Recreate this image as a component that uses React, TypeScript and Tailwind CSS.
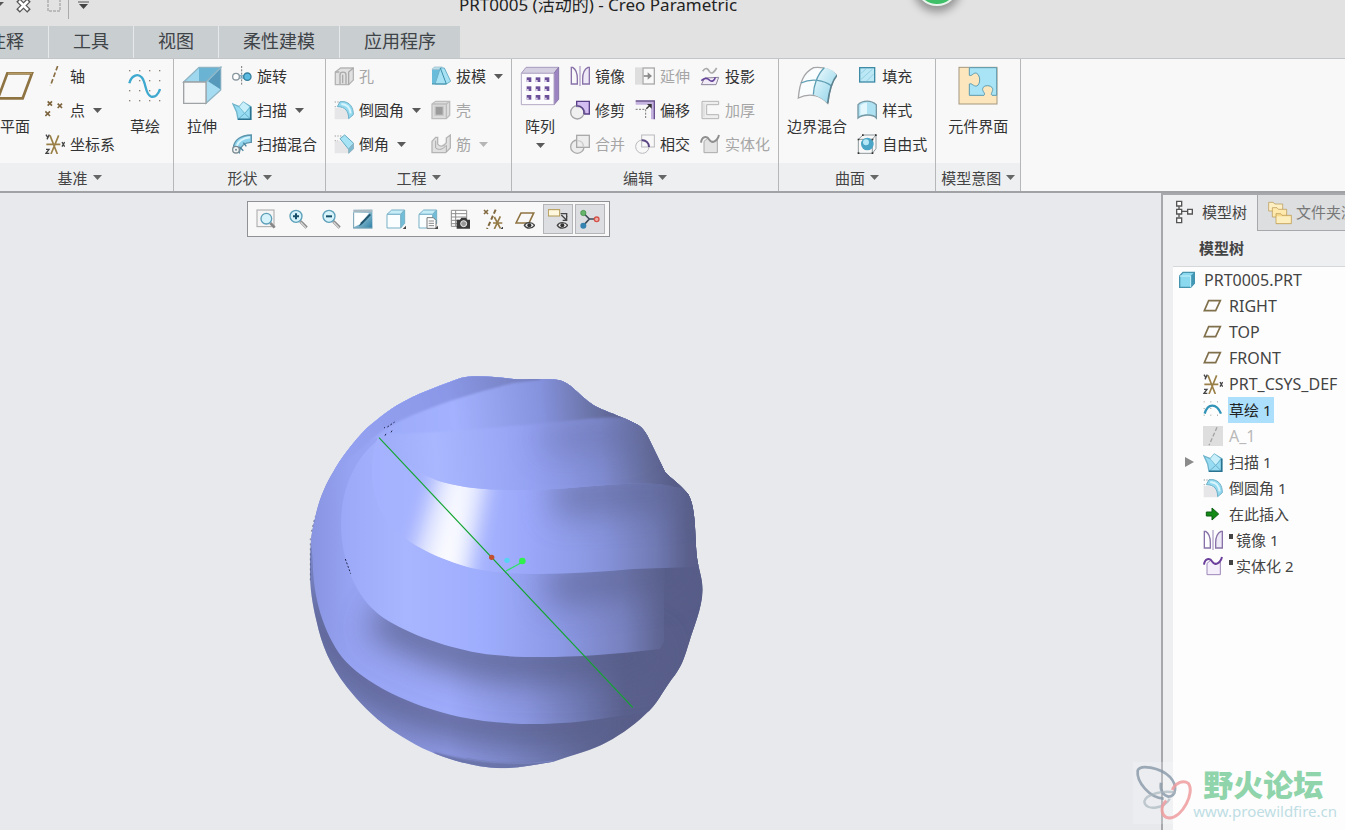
import { useState } from "react";
import type { ReactNode } from "react";

type ToolItem = {
  label: string;
  icon: ReactNode;
  caret?: boolean;
  disabled?: boolean;
};

const Icon = ({ children }: { children: ReactNode }) => (
  <svg viewBox="0 0 60 60" className="size-5 shrink-0" fill="none" strokeWidth="4">
    {children}
  </svg>
);

const BigIcon = ({ children }: { children: ReactNode }) => (
  <svg viewBox="0 0 120 120" className="size-10 shrink-0" fill="none" strokeWidth="4">
    {children}
  </svg>
);

const Caret = () => (
  <svg viewBox="0 0 9 5" className="h-[5px] w-[9px] shrink-0 fill-current">
    <path d="M0 0h9L4.500 5z" />
  </svg>
);

const dots = [6, 26, 46, 66].flatMap((x) => [6, 26, 46, 66].map((y) => [x, y]));

/* ---------- datum icons ---------- */

const PlaneBig = () => (
  <BigIcon>
    <path d="M37 22H111L83 97H9z" stroke="#8f7443" strokeWidth="8" />
    <path d="M39 22H111" stroke="#b59a63" strokeWidth="4" />
  </BigIcon>
);

const AxisIcon = () => (
  <Icon>
    <path d="M38 0 16 60" stroke="#8a6f45" strokeWidth="5" strokeDasharray="14 7" />
  </Icon>
);

const PointIcon = () => (
  <Icon>
    <g stroke="#7d6540" strokeWidth="5">
      <path d="M8 4l13 13M21 4 8 17M38 11l13 13M51 11 38 24M1 34l14 14M15 34 1 48" />
    </g>
  </Icon>
);

const CsysIcon = () => (
  <Icon>
    <path d="M4 31H46M15 4l22 56M41 4 18 60" stroke="#9a8047" strokeWidth="5" />
    <path d="M3 2l5 8M13 2 6 16M3 46h9L3 58h10M51 24l8 14M59 24l-8 14" stroke="#454545" />
  </Icon>
);

const SketchBig = () => (
  <BigIcon>
    {[12, 42, 72, 102].flatMap((x) =>
      [12, 42, 72, 102].map((y) => (
        <rect key={`${x}-${y}`} x={x} y={y} width="4" height="4" fill="#8d8478" />
      ))
    )}
    <path
      d="M13 52C18 30 38 20 50 34C64 50 60 84 77 91C90 96 100 86 105 69"
      stroke="#3fa9cf"
      strokeWidth="7"
    />
  </BigIcon>
);

/* ---------- shape icons ---------- */

const ExtrudeBig = () => (
  <BigIcon>
    <path d="M5 48 51 4H116L72 48z" fill="#9fd8ee" stroke="#8fb4c4" />
    <path d="M51 6V48H72L115 6z" fill="#6bb3d2" />
    <path d="M72 48 116 4V72L72 112z" fill="#a5dcf1" stroke="#8fb4c4" />
    <path d="M78 46 115 8V70z" fill="#5799ba" />
    <path d="M5 48H72V112H5z" fill="#f7f7f7" stroke="#9fa3a6" />
  </BigIcon>
);

const RevolveIcon = () => (
  <Icon>
    <path d="M29 0V60" stroke="#777" strokeWidth="3" strokeDasharray="6 4" />
    <path d="M14 24C22 32 36 32 46 24M14 40C22 34 36 34 46 40" stroke="#7daac2" />
    <circle cx="12" cy="32" r="10" fill="#fff" stroke="#89979f" />
    <circle cx="46" cy="32" r="11" fill="#5bbbe0" stroke="#357f9e" />
  </Icon>
);

const SweepIcon = () => (
  <Icon>
    <path d="M3 12 22 20 34 6 56 20V58H18L14 36z" fill="#97dcf2" stroke="#6fb4cb" />
    <path d="M22 20 38 40 56 20M38 40 18 58M38 40 56 58" stroke="#68b0c8" strokeWidth="3" />
    <path d="M22 20 34 6 52 20 38 38z" fill="#c9f0fa" />
    <path d="M56 20V58H18" stroke="#2b7391" strokeWidth="5" />
  </Icon>
);

const SweepBlendIcon = () => (
  <Icon>
    <path d="M4 42C6 18 26 4 58 3V25C38 24 24 38 22 56z" fill="#8fd3ec" stroke="#5b94ab" />
    <path d="M14 36C20 20 36 12 54 10" stroke="#d8f5fd" strokeWidth="6" />
    <path d="M22 38 34 50M34 26 43 37" stroke="#4a819a" />
    <circle cx="12" cy="47" r="10" fill="#f0f4f5" stroke="#7b8a92" />
    <circle cx="12" cy="47" r="3" fill="#7b8a92" />
  </Icon>
);

/* ---------- engineering icons ---------- */

const HoleIcon = () => (
  <Icon>
    <path d="M4 18 20 6H58V42L44 56H4z" fill="#e1e1e1" stroke="#b5b5b5" />
    <path d="M18 54V26C18 16 36 16 36 26V54M44 56V18L58 6M26 52V26M4 18H16" stroke="#aaa" />
  </Icon>
);

const RoundIcon = () => (
  <Icon>
    <path d="M2 24V58H44V42C40 28 28 22 2 24z" fill="#e6e6e8" />
    <path d="M18 5H30C48 8 58 22 58 44L44 56C44 34 34 20 10 20z" fill="#93d9ef" stroke="#6fb0c8" strokeWidth="3" />
    <path d="M22 12C38 13 48 24 50 40" stroke="#d8f5fd" strokeWidth="6" />
    <path d="M2 6H16M2 20H8" stroke="#bbb" strokeDasharray="4 4" />
  </Icon>
);

const ChamferIcon = () => (
  <Icon>
    <path d="M2 22V58H44V46L18 20z" fill="#e6e6e8" />
    <path d="M18 14 32 3 59 28 44 46z" fill="#a6e4f5" stroke="#64a9c2" strokeWidth="3" />
    <path d="M44 46 59 28V44L44 58z" fill="#7db9cf" stroke="#8cb2c0" strokeWidth="3" />
    <path d="M2 6H22M2 20H12" stroke="#bbb" strokeDasharray="4 4" />
  </Icon>
);

const DraftIcon = () => (
  <Icon>
    <path d="M3 10H26V54H3z" fill="#69bdda" />
    <path d="M3 10 10 3H34L28 10z" fill="#bfe4ef" stroke="#8fb4c4" strokeWidth="2" />
    <path d="M28 6H40L59 46 46 54H12z" fill="#a6e2f3" stroke="#6db1c9" strokeWidth="3" />
    <path d="M28 6 46 54M3 54H46" stroke="#3f8eab" strokeWidth="3" />
  </Icon>
);

const ShellIcon = () => (
  <Icon>
    <path d="M3 12 14 4H56V46L46 56H3z" fill="#dcdcdc" stroke="#bdbdbd" />
    <rect x="12" y="19" width="25" height="27" fill="#9b9b9b" stroke="#c9c9c9" />
    <path d="M46 56V12L56 4M3 12H46" stroke="#bdbdbd" />
  </Icon>
);

const RibIcon = () => (
  <Icon>
    <path d="M3 22 14 10H20V30C26 40 38 38 46 26L46 12 58 3V42L44 56H3z" fill="#e0e0e0" stroke="#b5b5b5" />
    <path d="M14 20V42C24 50 36 46 46 34V54" stroke="#aaa" strokeWidth="3" />
  </Icon>
);

/* ---------- editing icons ---------- */

const PatternBig = () => (
  <BigIcon>
    <path d="M4 22 18 4H116L102 22z" fill="#d5cfe2" stroke="#a79bbd" strokeWidth="3" />
    <path d="M102 22 116 4V100L102 116z" fill="#9c84c2" stroke="#8b78ab" strokeWidth="3" />
    <path d="M4 22H102V116H4z" fill="#fbfbfd" stroke="#b3a9c4" strokeWidth="3" />
    {[20, 47, 74].flatMap((x) =>
      [34, 61, 87].map((y) => (
        <g key={`${x}-${y}`}>
          <rect x={x} y={y} width="14" height="14" fill="#6b4f98" />
          <rect x={x} y={y + 8} width="6" height="6" fill="#d9cfe9" />
        </g>
      ))
    )}
  </BigIcon>
);

const MirrorIcon = () => (
  <Icon>
    <path d="M4 4H8C18 10 22 22 22 38V54H4z" stroke="#8871a8" />
    <path d="M58 4H54C42 10 38 22 38 38V54H58z" fill="#eee9f6" stroke="#8871a8" />
    <path d="M30 0V60" stroke="#9a86b8" strokeWidth="3" />
  </Icon>
);

const TrimIcon = () => (
  <Icon>
    <path d="M20 4H58V42H44C44 26 34 20 20 20z" fill="#d3bdf2" stroke="#583f87" />
    <circle cx="22" cy="37" r="20" fill="#ececee" fillOpacity="0.700" stroke="#a4a4a8" />
    <path d="M18 18C34 16 44 28 42 42" stroke="#583f87" />
  </Icon>
);

const MergeIcon = () => (
  <Icon>
    <circle cx="22" cy="38" r="20" fill="#ededed" stroke="#aaa" />
    <rect x="20" y="4" width="38" height="36" fill="#ededed" stroke="#aaa" />
    <path d="M22 20C34 20 40 28 40 38" stroke="#ccc" />
  </Icon>
);

const ExtendIcon = () => (
  <Icon>
    <rect x="0" y="4" width="22" height="52" fill="#dedede" />
    <rect x="24" y="6" width="34" height="48" stroke="#aaa" />
    <path d="M26 30H40" stroke="#8b8b8b" strokeWidth="5" />
    <path d="M38 19 51 30 38 41z" fill="#8b8b8b" />
  </Icon>
);

const OffsetIcon = () => (
  <Icon>
    <path d="M2 4H58V58H48V14H2z" fill="#c5b3df" />
    <path d="M2 3H58V58" stroke="#69518f" />
    <path d="M2 28H32V58" stroke="#777" strokeWidth="3" strokeDasharray="6 4" />
    <path d="M34 26 46 15" stroke="#333" />
    <path d="M36 12H50V26z" fill="#333" />
  </Icon>
);

const IntersectIcon = () => (
  <Icon>
    <rect x="20" y="3" width="38" height="36" stroke="#b9b9bd" strokeWidth="3" />
    <circle cx="22" cy="38" r="20" stroke="#b9b9bd" strokeWidth="3" />
    <path d="M20 19C34 18 42 28 42 39" stroke="#5a4483" strokeWidth="6" />
  </Icon>
);

const ProjectIcon = () => (
  <Icon>
    <path d="M8 16C18 2 24 8 28 16C34 26 42 20 50 6" stroke="#aaa" strokeWidth="5" />
    <path d="M14 36 4 56H48L56 34z" fill="#f1ecf8" stroke="#8d8498" strokeWidth="3" />
    <path d="M4 44C14 34 22 36 28 42C36 50 44 42 46 34" stroke="#66449a" strokeWidth="5" />
  </Icon>
);

const ThickenIcon = () => (
  <Icon>
    <path d="M6 4H56V14H20V44H56V56H6z" fill="#eee" stroke="#b5b5b5" strokeWidth="3" />
    <path d="M12 10V50" stroke="#d5d5d5" strokeWidth="3" />
  </Icon>
);

const SolidifyIcon = ({ muted = false }: { muted?: boolean }) => (
  <Icon>
    <path
      d="M12 22V56H52V16L36 26 24 12z"
      fill={muted ? "#e3e3e3" : "#f4effa"}
      stroke={muted ? "#aaa" : "#9c86b8"}
      strokeWidth="3"
    />
    <path
      d="M3 26C5 8 20 4 28 17C36 30 52 22 57 3"
      stroke={muted ? "#8f8f8f" : "#6b3f9b"}
      strokeWidth="6"
    />
  </Icon>
);

/* ---------- surface icons ---------- */

const BoundaryBig = () => (
  <BigIcon>
    <defs>
      <linearGradient id="surf" x1="0" y1="0" x2="1" y2="1">
        <stop offset="0" stopColor="#f5fdff" />
        <stop offset="1" stopColor="#86d0e8" />
      </linearGradient>
    </defs>
    <path d="M4 96C8 48 20 20 50 5C76 2 100 8 120 28C102 48 96 80 92 112C72 90 40 78 4 96z" fill="#fafdfe" stroke="#a5a5a8" />
    <path d="M82 5C100 7 112 16 120 28C102 48 96 80 92 112C82 102 62 88 49 86C50 60 60 26 82 5z" fill="url(#surf)" />
    <path d="M82 5C60 26 50 60 49 86M12 51C44 36 80 42 104 60" stroke="#5f9fb4" />
    <path d="M120 28C102 48 96 80 92 112" stroke="#5d8290" strokeWidth="5" />
  </BigIcon>
);

const FillIcon = () => (
  <Icon>
    <rect x="8" y="5" width="45" height="43" fill="#bce8f6" stroke="#3e8ba6" />
    <path d="M12 22 28 8M12 40 46 10M28 46 50 24" stroke="#7fc3da" strokeWidth="2" />
  </Icon>
);

const StyleIcon = () => (
  <Icon>
    <path d="M3 14C18 0 42 0 58 14V54C48 42 18 42 3 54z" fill="#aee2f3" stroke="#7797a3" />
    <path d="M10 16C16 10 24 8 30 8V42C22 42 14 44 10 46z" fill="#e3f7fc" />
  </Icon>
);

const FreestyleIcon = () => (
  <Icon>
    <path d="M4 16 18 3H57V44L46 58H4z" stroke="#90989c" strokeWidth="3" />
    <path d="M4 16H46V58M46 16 57 3" stroke="#90989c" strokeWidth="3" />
    <circle cx="31" cy="30" r="19" fill="#4aa5c6" />
    <circle cx="27" cy="25" r="9" fill="#b5e8f6" />
    <path d="M2 14h5v5H2zM44 14h5v5H44zM2 55h5v5H2zM44 55h5v5H44zM54 1h5v5H54zM15 1h5v5H15z" fill="#333" />
  </Icon>
);

const ComponentBig = () => (
  <BigIcon>
    <rect x="3" y="4" width="114" height="110" fill="#fbe6bd" stroke="#a39880" strokeWidth="3" />
    <path
      d="M34 5H116V88H102C96 84 106 76 104 68C100 56 76 56 74 68C72 76 84 82 78 88H34V54C42 50 46 62 56 60C68 56 68 28 56 22C46 18 42 32 34 28z"
      fill="#a9e4f6"
      stroke="#5c9bb0"
      strokeWidth="3"
    />
  </BigIcon>
);

/* ---------- view toolbar icons ---------- */

const Lens = ({ sign }: { sign: string }) => (
  <Icon>
    <path d="M37 37 56 56" stroke="#8b8b8b" strokeWidth="9" />
    <path d="M38 40 54 56" stroke="#d7d7d7" strokeWidth="4" />
    <circle cx="24" cy="22" r="18" fill="#d6f2fa" stroke="#5c9fb8" />
    <path d={sign} stroke="#174f68" strokeWidth="6" />
  </Icon>
);

const RefitIcon = () => (
  <Icon>
    <rect x="3" y="3" width="51" height="50" fill="#f5f5f5" stroke="#a5a5a5" strokeWidth="3" />
    <path d="M43 42 56 56" stroke="#888" strokeWidth="8" />
    <circle cx="31" cy="29" r="16" fill="#d6f2fa" stroke="#5c9fb8" />
  </Icon>
);

const RepaintIcon = () => (
  <Icon>
    <defs>
      <linearGradient id="repaint" x1="0" y1="0" x2="1" y2="1">
        <stop offset="0" stopColor="#d9f1f8" />
        <stop offset="1" stopColor="#2c7ea3" />
      </linearGradient>
    </defs>
    <rect x="1" y="2" width="57" height="56" fill="url(#repaint)" />
    <path d="M3 12H48L24 44 3 54z" fill="#fff" />
    <path d="M54 18 28 45 18 52 24 40 50 14z" fill="#22566f" />
    <path d="M1 2H58V10H1z" fill="#a9b9c2" />
    <path d="M2 10V58M1 57H58" stroke="#7ba3b5" strokeWidth="3" />
  </Icon>
);

const Cube = () => (
  <>
    <path d="M3 16 17 3H56L44 16z" fill="#c6ecf7" stroke="#76b1c7" strokeWidth="3" />
    <path d="M44 16 56 3V43L44 57z" fill="#72bdd7" stroke="#76b1c7" strokeWidth="3" />
    <path d="M3 16H44V57H3z" fill="#fafeff" stroke="#76b1c7" strokeWidth="3" />
  </>
);

const CubeIcon = () => (
  <Icon>
    <Cube />
    <path d="M60 50V60H50z" fill="#444" />
  </Icon>
);

const SavedViewIcon = () => (
  <Icon>
    <Cube />
    <path d="M27 26H46L54 34V58H27z" fill="#fff" stroke="#777" strokeWidth="3" />
    <path d="M32 36H48M32 43H48M32 50H48" stroke="#888" strokeWidth="3" />
    <path d="M60 50V60H50z" fill="#444" />
  </Icon>
);

const ViewManagerIcon = () => (
  <Icon>
    <path d="M4 4H50V52H4zM4 14H50M4 24H50M4 34H50M4 44H50M17 4V52" fill="#fff" stroke="#8d8d8d" strokeWidth="3" />
    <path d="M20 32H30L34 26H48L52 32H60V59H20z" fill="#3a3a3a" />
    <circle cx="41" cy="44" r="9" fill="#999" stroke="#eee" strokeWidth="3" />
  </Icon>
);

const DatumDisplayIcon = () => (
  <Icon>
    <path d="M3 3l12 12M15 3 3 15" stroke="#80683f" strokeWidth="5" />
    <path d="M38 2 12 60" stroke="#80683f" strokeWidth="6" strokeDasharray="13 7" />
    <path d="M30 42H58M34 24l18 34M52 22 34 60" stroke="#947a46" strokeWidth="5" />
    <path d="M62 50V60H52z" fill="#444" />
  </Icon>
);

const Eye = () => (
  <>
    <path d="M28 49C34 38 52 38 59 49C52 60 34 60 28 49z" fill="#eee" stroke="#444" strokeWidth="4" />
    <circle cx="43" cy="49" r="6" fill="#333" />
  </>
);

const PlaneDisplayIcon = () => (
  <Icon>
    <path d="M18 12H56L42 42H3z" stroke="#8f7443" strokeWidth="5" />
    <Eye />
  </Icon>
);

const AnnotationIcon = () => (
  <Icon>
    <rect x="1" y="2" width="34" height="19" fill="#fff8df" stroke="#b39853" strokeWidth="3" />
    <path d="M38 14H56V24" stroke="#444" />
    <path d="M40 18 56 34M56 22V34H44" stroke="#444" />
    <Eye />
  </Icon>
);

const SpinCenterIcon = () => (
  <Icon>
    <path d="M10 12 28 30 50 30M28 30 10 50" stroke="#3f4a56" strokeWidth="5" />
    <circle cx="10" cy="12" r="8" fill="#68b56c" stroke="#3d8a44" strokeWidth="2" />
    <circle cx="50" cy="31" r="7" fill="#efb0a8" stroke="#d3524a" />
    <circle cx="10" cy="50" r="9" fill="#3583b0" />
  </Icon>
);

/* ---------- model tree icons ---------- */

const PartIcon = () => (
  <Icon>
    <path d="M2 18 12 7H46V40L35 52H2z" fill="#8ad9ef" stroke="#4694ae" />
    <path d="M35 18 46 7V40L35 52z" fill="#4297b5" />
    <path d="M2 18H35V52" stroke="#c7f2fb" strokeWidth="3" />
  </Icon>
);

const PlaneIcon = () => (
  <Icon>
    <path d="M17 14H52L38 44H4z" stroke="#80704c" strokeWidth="5" />
  </Icon>
);

const SketchIcon = () => (
  <Icon>
    {dots.map(([x, y]) => (
      <rect key={`${x}-${y}`} x={x - 4} y={y - 2} width="3" height="3" fill="#999" />
    ))}
    <path d="M5 41C14 10 40 8 54 41" stroke="#3293b8" strokeWidth="7" />
  </Icon>
);

const MutedAxisIcon = () => (
  <Icon>
    <rect width="60" height="60" fill="#dedede" />
    <path d="M42 4 18 58" stroke="#a3a3a3" strokeDasharray="12 6" />
  </Icon>
);

const InsertIcon = () => (
  <Icon>
    <path d="M10 24H27V12L47 30 27 48V36H10z" fill="#138a15" stroke="#0b5c10" strokeWidth="3" />
  </Icon>
);

const TreeIcon = () => (
  <svg viewBox="0 0 60 72" className="h-6 w-5 shrink-0" fill="none" stroke="#555" strokeWidth="4">
    <path d="M12 19V27M12 42V52M18 34H38" />
    <path d="M5 4H20V18H5zM5 28H20V42H5zM5 54H20V68H5zM38 28H52V42H38z" fill="#fff" />
  </svg>
);

const FoldersIcon = () => (
  <svg viewBox="0 0 72 72" className="size-6 shrink-0" stroke="#b3924d" strokeWidth="2">
    <path d="M2 4H16L20 9H44V30H2z" fill="#fff0c4" />
    <path d="M13 20H27L31 25H56V48H13z" fill="#ffe9ad" />
    <path d="M24 38H38L42 43H70V68H24z" fill="#f7da8c" />
    <path d="M26 46H68V66H26z" fill="#fdeebd" stroke="none" />
  </svg>
);

/* ---------- ribbon ---------- */

const SmallTool = ({ label, icon, caret, disabled }: ToolItem) => (
  <button
    type="button"
    disabled={disabled}
    className="flex h-8.5 items-center gap-[5px] whitespace-nowrap text-[#333] disabled:text-[#a6a6a6]"
  >
    {icon}
    <span>{label}</span>
    {caret && (
      <span className="ml-[3px] opacity-80">
        <Caret />
      </span>
    )}
  </button>
);

const ToolColumn = ({ items }: { items: ToolItem[] }) => (
  <div className="flex flex-col items-start">
    {items.map((item) => (
      <SmallTool key={item.label} {...item} />
    ))}
  </div>
);

const BigTool = ({ label, icon, caret }: ToolItem) => (
  <button type="button" className="flex flex-col items-center self-start whitespace-nowrap pt-[7px] text-[#333]">
    {icon}
    <span className="mt-1 leading-8">{label}</span>
    {caret && (
      <span className="mt-px opacity-80">
        <Caret />
      </span>
    )}
  </button>
);

const Group = ({ title, children }: { title: string; children: ReactNode }) => (
  <section className="flex shrink-0 flex-col border-r border-[#b5b7b9]">
    <div className="flex h-26">{children}</div>
    <button
      type="button"
      className="flex h-7 items-center justify-center gap-[5px] bg-[#edeff1] pt-px text-[#444]"
    >
      <span>{title}</span>
      <span className="opacity-80">
        <Caret />
      </span>
    </button>
  </section>
);

const Ribbon = () => (
  <div className="flex border-t border-b-2 border-t-[#c3c6c8] border-b-[#a0a2a5] bg-[#f8f8f8] text-[15px] leading-5">
    <div className="-ml-3.5 flex">
      <Group title="基准">
        <div className="flex pl-[9px]">
          <BigTool label="平面" icon={<PlaneBig />} />
        </div>
        <div className="flex gap-2.5 pr-2 pl-2.5">
          <ToolColumn
            items={[
              { label: "轴", icon: <AxisIcon /> },
              { label: "点", icon: <PointIcon />, caret: true },
              { label: "坐标系", icon: <CsysIcon /> },
            ]}
          />
          <BigTool label="草绘" icon={<SketchBig />} />
        </div>
      </Group>
    </div>
    <Group title="形状">
      <div className="flex pr-2">
        <div className="flex pr-2.5 pl-2">
          <BigTool label="拉伸" icon={<ExtrudeBig />} />
        </div>
        <ToolColumn
          items={[
            { label: "旋转", icon: <RevolveIcon /> },
            { label: "扫描", icon: <SweepIcon />, caret: true },
            { label: "扫描混合", icon: <SweepBlendIcon /> },
          ]}
        />
      </div>
    </Group>
    <Group title="工程">
      <div className="flex gap-2.5 px-2">
        <ToolColumn
          items={[
            { label: "孔", icon: <HoleIcon />, disabled: true },
            { label: "倒圆角", icon: <RoundIcon />, caret: true },
            { label: "倒角", icon: <ChamferIcon />, caret: true },
          ]}
        />
        <ToolColumn
          items={[
            { label: "拔模", icon: <DraftIcon />, caret: true },
            { label: "壳", icon: <ShellIcon />, disabled: true },
            { label: "筋", icon: <RibIcon />, caret: true, disabled: true },
          ]}
        />
      </div>
    </Group>
    <Group title="编辑">
      <div className="flex pr-2.5 pl-2">
        <BigTool label="阵列" icon={<PatternBig />} caret />
      </div>
      <div className="flex gap-2.5 pr-2">
        <ToolColumn
          items={[
            { label: "镜像", icon: <MirrorIcon /> },
            { label: "修剪", icon: <TrimIcon /> },
            { label: "合并", icon: <MergeIcon />, disabled: true },
          ]}
        />
        <ToolColumn
          items={[
            { label: "延伸", icon: <ExtendIcon />, disabled: true },
            { label: "偏移", icon: <OffsetIcon /> },
            { label: "相交", icon: <IntersectIcon /> },
          ]}
        />
        <ToolColumn
          items={[
            { label: "投影", icon: <ProjectIcon /> },
            { label: "加厚", icon: <ThickenIcon />, disabled: true },
            { label: "实体化", icon: <SolidifyIcon muted />, disabled: true },
          ]}
        />
      </div>
    </Group>
    <Group title="曲面">
      <div className="flex gap-2.5 px-2">
        <BigTool label="边界混合" icon={<BoundaryBig />} />
        <ToolColumn
          items={[
            { label: "填充", icon: <FillIcon /> },
            { label: "样式", icon: <StyleIcon /> },
            { label: "自由式", icon: <FreestyleIcon /> },
          ]}
        />
      </div>
    </Group>
    <Group title="模型意图">
      <div className="flex px-3">
        <BigTool label="元件界面" icon={<ComponentBig />} />
      </div>
    </Group>
  </div>
);

/* ---------- title bar and tabs ---------- */

const TitleBar = () => (
  <header className="relative flex h-6.5 justify-center">
    <h1 className="mr-[149px] whitespace-nowrap text-[17px] leading-2.5 text-[#222]">
      PRT0005 (活动的) - Creo Parametric
    </h1>
    <svg viewBox="0 0 100 20" className="absolute top-0 left-0 h-5 w-25" fill="none">
      <path d="M0 2H4L0 6z" fill="#555" />
      <path d="M18 0 29 11M29 0 18 11" stroke="#555" strokeWidth="5" />
      <path d="M19 1 28 10M28 1 19 10" stroke="#fff" strokeWidth="2.500" />
      <path d="M48 0V11H60V0" stroke="#bbb" strokeWidth="2" strokeDasharray="3 1" />
      <path d="M68.500 0V19" stroke="#aaa" />
      <path d="M78 2H89" stroke="#555" />
      <path d="M79 4H88L83.500 9z" fill="#444" />
    </svg>
    <button
      type="button"
      aria-label="Assistant"
      className="absolute -top-[38px] left-[915px] size-11 rounded-full border-2 border-[#e9f5ec] bg-[#3fbf68] shadow-[0_4px_8px_2px_rgba(0,0,0,0.35)]"
    />
  </header>
);

const ribbonTabs = ["注释", "工具", "视图", "柔性建模", "应用程序"];

const RibbonTabs = () => (
  <nav className="-ml-9 flex h-8 text-lg text-[#3f4448]">
    {ribbonTabs.map((tab) => (
      <button
        key={tab}
        type="button"
        className="border-r border-[#e6e8ea] bg-[#c9ced1] px-6 pb-[3px] whitespace-nowrap last:border-r-0"
      >
        {tab}
      </button>
    ))}
  </nav>
);

/* ---------- graphics area ---------- */

const viewTools = [
  { name: "Refit", icon: <RefitIcon /> },
  { name: "Zoom in", icon: <Lens sign="M15 22H33M24 13V31" /> },
  { name: "Zoom out", icon: <Lens sign="M15 22H33" /> },
  { name: "Repaint", icon: <RepaintIcon /> },
  { name: "Display style", icon: <CubeIcon /> },
  { name: "Saved orientations", icon: <SavedViewIcon /> },
  { name: "View manager", icon: <ViewManagerIcon /> },
  { name: "Datum display", icon: <DatumDisplayIcon /> },
  { name: "Plane display", icon: <PlaneDisplayIcon /> },
  { name: "Annotation display", icon: <AnnotationIcon />, on: true },
  { name: "Spin center", icon: <SpinCenterIcon />, on: true },
];

const ViewToolbar = () => (
  <div className="mt-2 ml-[247px] flex h-9 w-[363px] items-center justify-between self-start border border-[#8f9194] bg-[#f8f8f8] pr-1 pl-[3px]">
    {viewTools.map((tool) => (
      <button
        key={tool.name}
        type="button"
        aria-label={tool.name}
        aria-pressed={!!tool.on}
        className="flex size-[30px] items-center justify-center border border-transparent aria-pressed:border-[#b3b5b9] aria-pressed:bg-[#dddee2]"
      >
        {tool.icon}
      </button>
    ))}
  </div>
);

const silhouette =
  "M480 40C515 28 590 36 640 42C690 44 740 40 775 45C812 52 830 85 880 120C905 136 970 155 1015 180C1030 190 1040 206 1050 228L1095 320C1115 342 1145 362 1165 388C1188 430 1184 500 1190 570C1194 610 1208 640 1208 675C1206 730 1180 790 1168 830C1155 870 1150 895 1125 930C1100 960 1075 1010 1050 1035C1010 1075 970 1105 920 1132C880 1155 820 1170 760 1190C700 1200 650 1210 600 1210C540 1208 480 1192 430 1175C370 1155 320 1125 270 1092C220 1055 175 1010 140 965C90 900 65 840 50 770C35 710 29 660 30 610C30 550 32 510 45 460C55 410 75 360 100 320C120 285 160 230 200 190C240 155 280 125 320 105C370 80 430 58 480 40z";

// ridge lines of the twisted body, bottom to top
const ridgeF =
  "M0 400C26 470 36 540 38 590C40 700 70 800 125 875C190 955 330 1022 480 1056C600 1080 760 1088 930 1057";
const ridgeE =
  "M235 225C150 290 118 400 124 500C132 620 180 710 250 758C330 810 440 848 560 868C700 884 880 876 1080 852";
const ridgeD =
  "M232 220C205 300 210 400 262 470C310 530 400 575 500 605C620 638 820 628 1000 612L1160 607";
const ridgeC =
  "M240 215C290 280 360 330 430 352C520 378 650 380 800 370C900 362 1060 345 1120 365";
const ridgeB = "M235 207C400 206 650 182 800 168C860 162 910 156 960 158";
const ridgeA = "M250 195C340 140 480 95 640 54L720 44";

const Model = () => (
  <svg viewBox="0 0 1260 1245" className="mt-32 ml-[300px] h-[415px] w-[420px] shrink-0" fill="none">
    <defs>
      <clipPath id="body">
        <path d={silhouette} />
      </clipPath>
      <clipPath id="bandD">
        <path d={`${ridgeD}L1260 607V365H1120C1060 345 900 362 800 370C650 380 520 378 430 352C360 330 290 280 240 215z`} />
      </clipPath>
      <filter id="soft" filterUnits="userSpaceOnUse" x="-200" y="-200" width="1660" height="1660">
        <feGaussianBlur stdDeviation="50" />
      </filter>
      <filter id="glow" filterUnits="userSpaceOnUse" x="0" y="0" width="1260" height="1245">
        <feGaussianBlur stdDeviation="28 10" />
      </filter>
      <filter id="edge" filterUnits="userSpaceOnUse" x="0" y="0" width="1260" height="1245">
        <feGaussianBlur stdDeviation="3" />
      </filter>
      <linearGradient id="g1" gradientUnits="userSpaceOnUse" x1="30" y1="0" x2="1210" y2="0">
        <stop offset="0" stopColor="#7681c0" />
        <stop offset="0.350" stopColor="#8f9be6" />
        <stop offset="0.500" stopColor="#808ccf" />
        <stop offset="0.700" stopColor="#626a99" />
        <stop offset="0.800" stopColor="#595f8a" />
        <stop offset="1" stopColor="#575d88" />
      </linearGradient>
      <linearGradient id="g2" gradientUnits="userSpaceOnUse" x1="30" y1="0" x2="1210" y2="0">
        <stop offset="0" stopColor="#8894e0" />
        <stop offset="0.100" stopColor="#96a3f2" />
        <stop offset="0.350" stopColor="#9eabfb" />
        <stop offset="0.550" stopColor="#8995de" />
        <stop offset="0.700" stopColor="#6d77b0" />
        <stop offset="0.800" stopColor="#5b618d" />
        <stop offset="1" stopColor="#575d88" />
      </linearGradient>
      <linearGradient id="g3" gradientUnits="userSpaceOnUse" x1="100" y1="0" x2="1210" y2="0">
        <stop offset="0" stopColor="#9aa7f7" />
        <stop offset="0.200" stopColor="#a8b6ff" />
        <stop offset="0.400" stopColor="#9fadfe" />
        <stop offset="0.600" stopColor="#8d9ae7" />
        <stop offset="0.780" stopColor="#7882c0" />
        <stop offset="0.880" stopColor="#5f6694" />
        <stop offset="0.920" stopColor="#575d88" />
      </linearGradient>
      <linearGradient id="g4" gradientUnits="userSpaceOnUse" x1="200" y1="0" x2="1210" y2="0">
        <stop offset="0" stopColor="#a4b1fe" />
        <stop offset="0.300" stopColor="#a8b6ff" />
        <stop offset="0.480" stopColor="#9ba8fa" />
        <stop offset="0.700" stopColor="#8794dc" />
        <stop offset="0.860" stopColor="#707ab3" />
        <stop offset="0.950" stopColor="#5b618d" />
        <stop offset="1" stopColor="#575d88" />
      </linearGradient>
      <linearGradient id="g5" gradientUnits="userSpaceOnUse" x1="60" y1="260" x2="1110" y2="190">
        <stop offset="0" stopColor="#8693e0" />
        <stop offset="0.120" stopColor="#9ba9f8" />
        <stop offset="0.330" stopColor="#a9b7ff" />
        <stop offset="0.600" stopColor="#94a1f2" />
        <stop offset="0.800" stopColor="#7f8bd0" />
        <stop offset="0.930" stopColor="#646c9b" />
        <stop offset="1" stopColor="#575d88" />
      </linearGradient>
      <linearGradient id="g6" gradientUnits="userSpaceOnUse" x1="200" y1="180" x2="950" y2="110">
        <stop offset="0" stopColor="#9caaf8" />
        <stop offset="0.350" stopColor="#a3b1fe" />
        <stop offset="0.700" stopColor="#8592dd" />
        <stop offset="0.900" stopColor="#6a73a6" />
        <stop offset="1" stopColor="#5d6491" />
      </linearGradient>
      <linearGradient id="g7" gradientUnits="userSpaceOnUse" x1="200" y1="180" x2="750" y2="40">
        <stop offset="0" stopColor="#93a0ef" />
        <stop offset="0.450" stopColor="#8b98e8" />
        <stop offset="1" stopColor="#6f79b2" />
      </linearGradient>
    </defs>
    <g clipPath="url(#body)">
      <rect width="1260" height="1245" fill="url(#g1)" />
      <path d="M400 1160C520 1196 640 1200 760 1188L700 1230H430z" fill="#6d77ad" filter="url(#edge)" />
      <path
        d="M30 700C60 800 85 840 130 890C200 975 330 1036 480 1070C600 1094 760 1098 930 1067"
        stroke="#575d88"
        strokeWidth="90"
        opacity="0.950"
        filter="url(#soft)"
      />
      <path d={`${ridgeF}L1260 1010V0H0z`} fill="url(#g2)" />
      <path
        d="M230 750C330 810 440 862 560 884C700 900 880 892 1080 868"
        stroke="#575d88"
        strokeWidth="120"
        opacity="0.800"
        filter="url(#soft)"
      />
      <path d={`${ridgeE}L1092 830V700L1095 600H1260V0H235z`} fill="url(#g3)" />
      <path
        d="M740 670C820 660 900 645 1000 635L1160 615"
        stroke="#575d88"
        strokeWidth="110"
        opacity="0.600"
        filter="url(#soft)"
      />
      <path d={`${ridgeD}L1260 600V0H232z`} fill="url(#g4)" />
      <g clipPath="url(#bandD)">
        <path
          d="M760 400C860 392 980 380 1150 380"
          stroke="#575d88"
          strokeWidth="110"
          opacity="0.550"
          filter="url(#soft)"
        />
        <path d="M420 300H575L500 660H310z" fill="#fff" opacity="0.650" filter="url(#glow)" />
        <path d="M470 310H510L470 630H390z" fill="#fff" filter="url(#glow)" />
      </g>
      <path d={`${ridgeC}L1260 385V0H60L0 420C70 330 160 240 240 215z`} fill="url(#g5)" />
      <path
        d="M720 225C840 215 920 205 1020 215"
        stroke="#575d88"
        strokeWidth="80"
        opacity="0.350"
        filter="url(#soft)"
      />
      <path d={`${ridgeB}L1020 150V0H200z`} fill="url(#g6)" filter="url(#edge)" />
      <path d={`${ridgeA}V0H100V320z`} fill="url(#g7)" filter="url(#edge)" />
      <path d="M500 1180C590 1198 680 1198 760 1188" stroke="#7984bf" strokeWidth="3" />
    </g>
    <path d="M31 520V655M34 500 45 455" stroke="#4d5479" strokeWidth="2" strokeDasharray="6 9" />
    <path d="M252 188h3M262 186 284 171M255 212l5-10M273 202l5-8M136 582l16 44" stroke="#252a52" strokeWidth="3" strokeDasharray="6 5" />
    <path d="M237 218 998 1027" stroke="#12a52f" strokeWidth="3.500" />
    <path d="M618 618 662 594" stroke="#2fe06a" strokeWidth="4" />
    <circle cx="575" cy="577" r="8" fill="#c2502f" />
    <circle cx="621" cy="586" r="8" fill="#55d3f3" />
    <circle cx="667" cy="588" r="10" fill="#2ff04c" />
  </svg>
);

/* ---------- model tree ---------- */

type TreeNode = {
  label: string;
  icon: ReactNode;
  datum?: boolean;
  muted?: boolean;
  expandable?: boolean;
  marked?: boolean;
};

const treeNodes: TreeNode[] = [
  { label: "RIGHT", icon: <PlaneIcon />, datum: true },
  { label: "TOP", icon: <PlaneIcon />, datum: true },
  { label: "FRONT", icon: <PlaneIcon />, datum: true },
  { label: "PRT_CSYS_DEF", icon: <CsysIcon />, datum: true },
  { label: "草绘 1", icon: <SketchIcon /> },
  { label: "A_1", icon: <MutedAxisIcon />, datum: true, muted: true },
  { label: "扫描 1", icon: <SweepIcon />, expandable: true },
  { label: "倒圆角 1", icon: <RoundIcon /> },
  { label: "在此插入", icon: <InsertIcon /> },
  { label: "镜像 1", icon: <MirrorIcon />, marked: true },
  { label: "实体化 2", icon: <SolidifyIcon />, marked: true },
];

const ModelTree = () => {
  const [selected, setSelected] = useState("草绘 1");

  return (
    <aside className="flex w-46 shrink-0 flex-col overflow-hidden border-l-2 border-[#a6a8ac] bg-[#eeeff1] text-[15px] whitespace-nowrap text-[#444]">
      <div className="flex h-9.5 shrink-0 border-t-2 border-[#a6a8ac]">
        <button type="button" className="flex shrink-0 items-center gap-[7px] pr-2.5 pb-0.5 pl-3">
          <TreeIcon />
          <span>模型树</span>
        </button>
        <button
          type="button"
          className="flex shrink-0 items-center gap-1 border-b border-l border-[#a6a8ac] bg-[#dcdee0] pl-2.5 text-[#777]"
        >
          <FoldersIcon />
          <span>文件夹浏览器</span>
        </button>
      </div>
      <h2 className="flex h-[35px] shrink-0 items-center pb-px pl-9 font-bold">模型树</h2>
      <ul className="ml-2.5 flex-1 border-t border-[#d5d7d9] bg-[#fdfdfd]">
        <li>
          <button type="button" className="flex h-6.5 items-center gap-[5px] pl-[6px] text-base">
            <PartIcon />
            PRT0005.PRT
          </button>
        </li>
        {treeNodes.map((node) => (
          <li key={node.label}>
            <button
              type="button"
              onClick={() => setSelected(node.label)}
              className="flex h-6.5 items-center"
            >
              <span className="flex w-[30px] pl-3 text-[#8b8b8b]">
                {node.expandable && (
                  <svg viewBox="0 0 9 10" className="h-2.5 w-[9px] fill-current">
                    <path d="M0 0 9 5 0 10z" />
                  </svg>
                )}
              </span>
              {node.icon}
              <span
                className={`ml-[5px] flex h-full items-center px-px ${node.datum ? "text-base" : ""} ${
                  node.muted ? "text-[#b9b9b9]" : ""
                } ${selected === node.label ? "bg-[#abdffc] pr-[3px] text-[#222]" : ""}`}
              >
                {node.marked && <span className="mr-[3px] mb-2 h-[5px] w-1 bg-[#444]" />}
                {node.label}
              </span>
            </button>
          </li>
        ))}
      </ul>
    </aside>
  );
};

const Watermark = () => (
  <div className="pointer-events-none absolute right-2 bottom-1.5 flex items-center bg-white/20 whitespace-nowrap">
    <svg viewBox="0 0 180 186" className="h-[62px] w-[60px] shrink-0" fill="none">
      <path d="M92 110C50 108 10 60 14 26C20 6 80 16 110 44C136 72 128 104 106 104C90 100 80 84 84 62" stroke="#8797a8" strokeWidth="8" opacity="0.800" />
      <path d="M128 92C90 84 40 96 34 118C36 150 100 138 110 110" stroke="#a9b6bf" strokeWidth="7" opacity="0.700" />
      <path d="M118 84C126 64 150 52 166 64C186 90 150 166 108 168C84 166 80 134 100 116" stroke="#ee9c9f" strokeWidth="9" opacity="0.850" />
    </svg>
    <div className="flex flex-col">
      <span className="pl-2.5 text-[30px] leading-9 font-black text-[#8fd4aa]">野火论坛</span>
      <span className="text-[15px] leading-4 text-[#bfdde4]">www.proewildfire.cn</span>
    </div>
  </div>
);

const App = () => {
  return (
    <div className="relative flex min-h-screen flex-col overflow-hidden bg-[#e2e2e2] font-['Noto_Sans','Noto_Sans_CJK_SC',sans-serif]">
      <TitleBar />
      <RibbonTabs />
      <Ribbon />
      <div className="flex flex-1">
        <main className="flex flex-1 flex-col overflow-hidden bg-[#e8e9ed]">
          <ViewToolbar />
          <Model />
        </main>
        <ModelTree />
      </div>
      <Watermark />
    </div>
  );
};

export default App;
